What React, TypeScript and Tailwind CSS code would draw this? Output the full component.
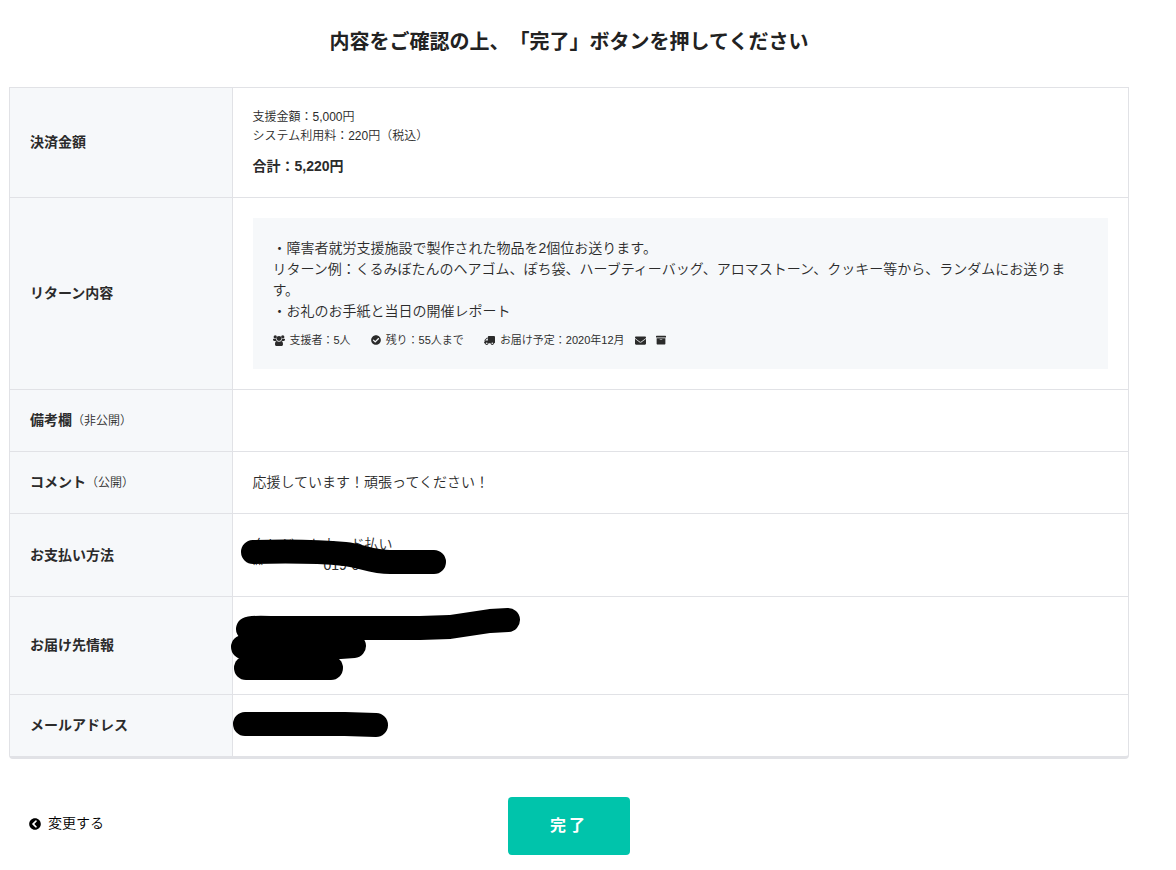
import type { ReactNode } from "react";
import { FaArchive, FaCheckCircle, FaChevronCircleLeft, FaEnvelope, FaTruck } from "react-icons/fa";

const UsersIcon = () => (
  <svg className="w-3 h-[11px]" viewBox="0 0 24 22" fill="currentColor">
    <circle cx="4.5" cy="3.8" r="3.3" />
    <circle cx="19.5" cy="3.8" r="3.3" />
    <circle cx="12" cy="7" r="4.8" />
    <path d="M0 8.5C0 7.5 1 7 2 7.4C3.5 8 5 8 6 7.5C6.2 9.3 6.8 10.6 7.8 11.8H2.5C1 11.8 0 11 0 9.6Z" />
    <path d="M24 8.5C24 7.5 23 7 22 7.4C20.5 8 19 8 18 7.5C17.8 9.3 17.2 10.6 16.2 11.8H21.5C23 11.8 24 11 24 9.6Z" />
    <path d="M7.5 12.2C10 14 14 14 16.5 12.2C19 12.4 20 15 20 18.5C20 20.8 18.8 22 16.8 22H7.2C5.2 22 4 20.8 4 18.5C4 15 5 12.4 7.5 12.2Z" />
  </svg>
);

const Row = ({ label, note, children }: { label: string; note?: string; children?: ReactNode }) => (
  <tr className="border-b border-[#e1e2e6]">
    <th scope="row" className="w-[222px] bg-[#f6f8fa] border-r border-[#e1e2e6] p-5 text-left align-middle font-bold">
      {label}
      {note && <span className="text-xs leading-[19px] font-[350]">{note}</span>}
    </th>
    <td className="p-5 align-middle">{children}</td>
  </tr>
);

const App = () => {
  return (
    <main className="pl-[9px] pr-[47px] pt-[26px] pb-4 bg-white text-[#2b2b2b] text-[14px] leading-[21px] font-[350] font-['Liberation_Sans','Noto_Sans_CJK_JP',sans-serif] [text-spacing-trim:space-all]">
      <h1 className="text-center text-[20px] leading-8 font-bold text-[#222] mb-[29px]">
        内容をご確認の上、「完了」ボタンを押してください
      </h1>

      <div className="border border-b-3 border-[#e1e2e6] rounded-b-sm">
        <table className="w-full border-collapse [&_tr:last-child]:border-b-0">
          <tbody>
            <Row label="決済金額">
              <p className="text-xs leading-[19px]">支援金額：5,000円</p>
              <p className="text-xs leading-[19px]">システム利用料：220円（税込）</p>
              <p className="mt-[10px] font-bold">合計：5,220円</p>
            </Row>
            <Row label="リターン内容">
              <div className="bg-[#f6f8fa] p-5">
                <p>・障害者就労支援施設で製作された物品を2個位お送ります。</p>
                <p>
                  リターン例：くるみぼたんのヘアゴム、ぽち袋、ハーブティーバッグ、アロマストーン、クッキー等から、ランダムにお送ります。
                </p>
                <p>・お礼のお手紙と当日の開催レポート</p>
                <ul className="mt-[9px] flex flex-wrap items-center text-[11px] leading-[18px]">
                  <li className="flex items-center gap-[5px] mr-5">
                    <UsersIcon />
                    支援者：5人
                  </li>
                  <li className="flex items-center gap-[5px] mr-5">
                    <FaCheckCircle className="size-[10px]" />
                    残り：55人まで
                  </li>
                  <li className="flex items-center gap-[5px] mr-[10px]">
                    <FaTruck className="size-[11px] -scale-x-100" />
                    お届け予定：2020年12月
                  </li>
                  <li className="mr-[10px]">
                    <FaEnvelope className="size-[11px]" />
                  </li>
                  <li>
                    <FaArchive className="size-[10px]" />
                  </li>
                </ul>
              </div>
            </Row>
            <Row label="備考欄" note="（非公開）">
              <p className="h-[21px]" />
            </Row>
            <Row label="コメント" note="（公開）">
              応援しています！頑張ってください！
            </Row>
            <Row label="お支払い方法">
              <div className="relative">
                <p>クレジットカード払い</p>
                <p className="flex gap-15">
                  <span>**</span>
                  <span>019-0</span>
                </p>
                {/* marker over the card number */}
                <svg className="absolute -left-5 -top-5 w-[300px] h-[82px]" viewBox="233 514 300 82" fill="none" stroke="#000" strokeWidth="24" strokeLinecap="round" strokeLinejoin="round">
                  <path d="M253 552C290 551 325 552 345 554C362 556 372 562 390 562H434" />
                </svg>
              </div>
            </Row>
            <Row label="お届け先情報">
              <div className="relative h-[57px]">
                <svg className="absolute -left-[22px] -top-5 w-[300px] h-[97px]" viewBox="231 597 300 97" fill="none" stroke="#000" strokeWidth="24" strokeLinecap="round" strokeLinejoin="round">
                  <path d="M248 629Q252 627 270 628H420L450 627L490 621L508 620" />
                  <path d="M243 647H340L354 646" />
                  <path d="M246 668H331" />
                </svg>
              </div>
            </Row>
            <Row label="メールアドレス">
              <div className="relative h-[21px]">
                <svg className="absolute -left-5 -top-5 w-[300px] h-[61px]" viewBox="233 695 300 61" fill="none" stroke="#000" strokeWidth="24" strokeLinecap="round" strokeLinejoin="round">
                  <path d="M245 724H345L376 725" />
                </svg>
              </div>
            </Row>
          </tbody>
        </table>
      </div>

      <div className="mt-[38px] grid grid-cols-3">
        <a href="#" className="mt-4 ml-5 flex items-center gap-[7px] justify-self-start self-start text-black">
          <FaChevronCircleLeft className="size-3" />
          変更する
        </a>
        <button type="button" className="justify-self-center rounded bg-[#00c4ab] px-[42px] py-[17px] text-base leading-6 font-bold text-white tracking-[3px]">
          完了
        </button>
      </div>
    </main>
  );
};

export default App;
